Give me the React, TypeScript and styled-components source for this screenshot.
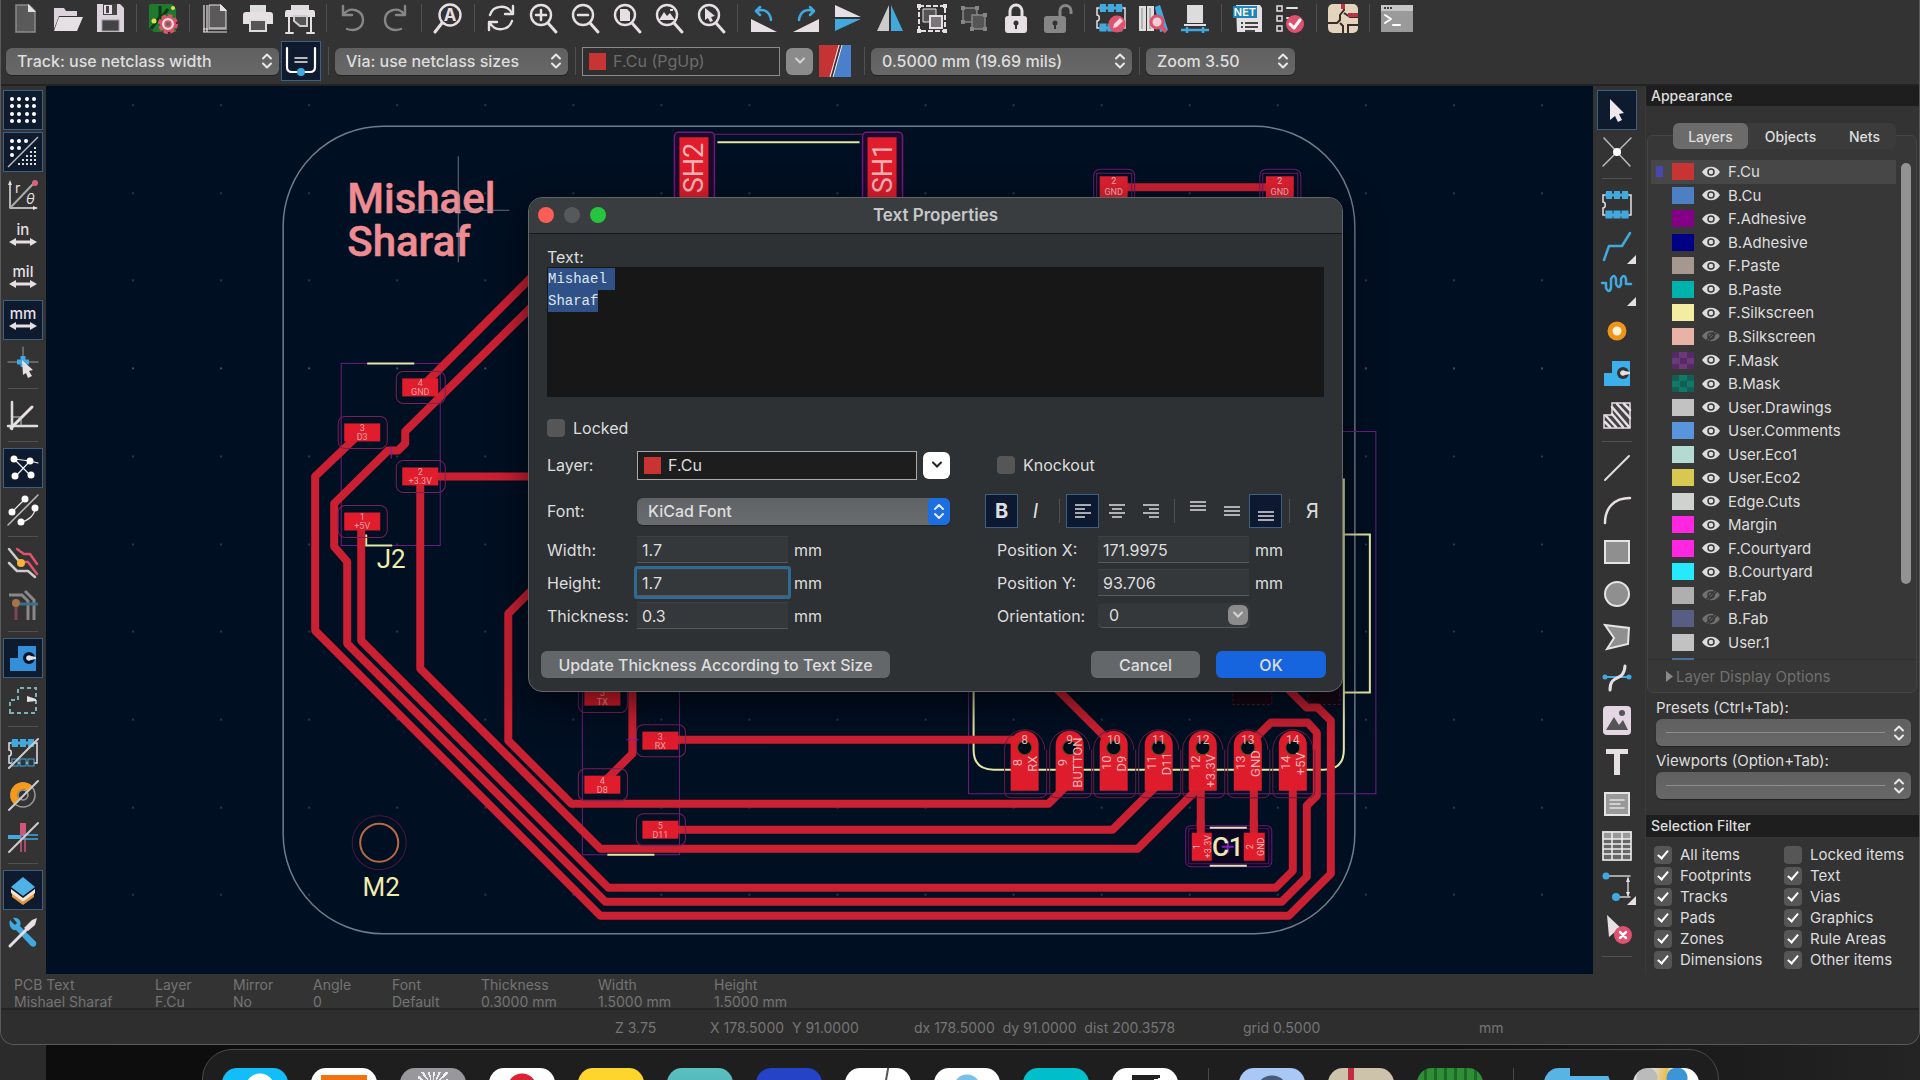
import React, { useEffect, useRef } from "react";
import styled, { createGlobalStyle, css } from "styled-components";

const UI = `Inter, "Liberation Sans", Arial, sans-serif`;
const MONO = `"Liberation Mono", "Courier New", monospace`;
const BOARD = `Roboto, "Liberation Sans", sans-serif`;

const GlobalStyle = createGlobalStyle`
  *, *::before, *::after { box-sizing: border-box; }
  html, body { margin: 0; height: 100%; background: #111; overflow: hidden; }
  button, input, select, textarea { font: inherit; color: inherit; margin: 0; }
  svg { display: block; }
`;

const Desktop = styled.div`
  display: flex;
  flex-direction: column;
  height: 100vh;
  overflow: hidden;
  font-family: ${UI};
  font-size: 16px;
  color: #dedede;
  background: linear-gradient(90deg, #2b2b2b 0 46px, #0d0d0d 46px, #101010 75%, #242424);
`;

const AppWindow = styled.div`
  flex: 1;
  min-height: 0;
  display: flex;
  flex-direction: column;
  background: #333;
  border: 1px solid #5a5a5a;
  border-top: 0;
  border-radius: 0 0 14px 14px;
  overflow: hidden;
`;

/* ---------- icons ---------- */

const W = "#e6dfe4";
const B = "#42a9de";
const R = "#e0506f";
const G = "#868686";
const O = "#f39a1c";

const line = (d: string, c = W, w = 2) => (
  <path d={d} fill="none" stroke={c} strokeWidth={w} strokeLinecap="round" strokeLinejoin="round" />
);
const lens = (inner: React.ReactNode) => (
  <>
    <circle cx="13" cy="12" r="10" fill="none" stroke={W} strokeWidth="2.4" />
    <path d="M20 20L28 29" stroke={W} strokeWidth="3" strokeLinecap="round" />
    <g transform="translate(-4 0)">{inner}</g>
  </>
);
const unit = (t: string) => (
  <>
    <text x="15" y="14" fill={W} fontSize="15" fontWeight="500" textAnchor="middle">{t}</text>
    <path d="M1 21L8 17V19.500H22V17L29 21L22 25V22.500H8V25Z" fill={W} />
  </>
);
const chip = (fillBottom = true) => (
  <>
    <path d="M1 5H29V25H1V18C4 18 4 12 1 12Z" fill="none" stroke={W} strokeWidth="1.500" />
    {[5, 13, 21].map((x) => (
      <g key={x}>
        <rect x={x - 1} y="1" width="6" height="8" fill={B} />
        <rect x={x - 1} y="21" width="6" height="7" fill={fillBottom ? B : "#333"} stroke={B} />
      </g>
    ))}
    <path d="M3 5H27" stroke={B} strokeWidth="3" />
    {fillBottom && <path d="M3 25H27" stroke={B} strokeWidth="3" />}
  </>
);
const zone = (fill: string, bg: string) => (
  <>
    <path d="M2 28V15H10V3H28V28Z" fill={fill} />
    <circle cx="21" cy="15" r="6" fill={bg} />
    <path d="M18 15a3 3 0 0 1 5-2L28 14V16L23 17a3 3 0 0 1-5-2Z" fill={W} />
  </>
);
const corner = <path d="M34 23V32H25Z" fill={W} />;

const ICONS: Record<string, React.ReactNode> = {
  newFile: <><path d="M5 2H18L24 8V29H5Z" fill="#5a5a5a" stroke="#8a8a8a" strokeWidth="1.500" /><path d="M17 1L25 9H17Z" fill={W} /></>,
  open: <><path d="M1 26V5H11L13 8H24V13H6Z" fill="#ddd3da" /><path d="M6 14H30L24 28H1Z" fill={W} /></>,
  save: <><path d="M2 1H25L29 5V29H2Z" fill="#ddd3dd" /><rect x="8" y="1" width="14" height="11" fill="#444" /><rect x="9" y="2" width="8" height="9" fill="#e8e0e6" /><rect x="11" y="3" width="3" height="7" fill="#444" /><rect x="7" y="17" width="17" height="11" fill="#444" stroke="#999" /></>,
  board: <><path d="M1 3Q1 1 3 1H24L28 6V29H6L1 25Z" fill="#1f7a2e" /><path d="M3 26L12 14V3M14 14L20 6" stroke="#0c3b17" strokeWidth="3" fill="none" /><circle cx="6" cy="18" r="2.500" fill="#e2e04a" /><circle cx="25" cy="5" r="2" fill="#e2e04a" /><circle cx="20" cy="21" r="8" fill="none" stroke={R} strokeWidth="4" strokeDasharray="4 2.280" /><circle cx="20" cy="21" r="7" fill="#e7e0da" stroke={R} strokeWidth="2" /><circle cx="20" cy="21" r="3" fill="#6b6b5a" stroke={R} strokeWidth="1.500" /></>,
  pageSettings: <><path d="M8 2H20L25 7V25H8Z" fill="#5a5a5a" stroke={W} strokeWidth="1" /><path d="M19 1L26 8H19Z" fill={W} /><path d="M3 2V29M6 2V29M2 26H26M2 29H26" stroke={W} strokeWidth="1.200" /></>,
  print: <><path d="M7 2H23V9H7Z" fill="#ddd" /><path d="M0 12Q0 9 3 9H27Q30 9 30 12V21H24V16H6V21H0Z" fill={W} /><path d="M7 17H23V28H7Z" fill="#555" stroke="#ddd" strokeWidth="2" /></>,
  plot: <><path d="M6 2H24V8H6Z" fill="#ddd" /><path d="M0 10Q0 7 2 7H28Q30 7 30 10V14H0Z" fill={W} /><path d="M9 13H22V23H15L9 18Z" fill="#555" stroke="#ccc" strokeWidth="2" />{line("M4 14V29M26 14V29M1 30H8M22 30H29")}</>,
  undo: <>{line("M5 3V12H14M6 11C12 3 25 7 25 17C25 25 17 29 9 26", G, 2.400)}</>,
  redo: <>{line("M25 3V12H16M24 11C18 3 5 7 5 17C5 25 13 29 21 26", G, 2.400)}</>,
  find: <><circle cx="17" cy="12" r="10.500" fill="none" stroke={W} strokeWidth="2.400" /><path d="M9 20L2 29" stroke={W} strokeWidth="3" strokeLinecap="round" /><text x="17" y="18" fill={W} fontSize="17" fontWeight="700" textAnchor="middle">A</text></>,
  refresh: <>{line("M27 3V11H19M26 10C21 1 7 2 4 12M3 27V19H11M4 20C9 29 23 28 26 18", W, 2.400)}</>,
  zoomIn: lens(line("M12 12H22M17 7V17", W, 2.500)),
  zoomOut: lens(line("M12 12H22", W, 2.500)),
  zoomPage: lens(<path d="M12 6H19L22 9V18H12Z" fill={W} />),
  zoomObjects: lens(<path d="M9 17L14 9L17 13L20 10L25 17ZM20 6h3v2h-3Z" fill={W} />),
  zoomSelect: lens(<path d="M13 5L23 13L19 14L21 18L18 19L16 15L13 17Z" fill={W} />),
  rotateLeft: <><path d="M2 16V29H28Z" fill={W} />{line("M11 4L7 8L11 12M8 8C15 5 21 9 22 17", B, 2.500)}</>,
  rotateRight: <><path d="M28 16V29H2Z" fill={W} />{line("M19 4L23 8L19 12M22 8C15 5 9 9 8 17", B, 2.500)}</>,
  flipV: <><path d="M2 2L28 14H2Z" fill={W} /><path d="M2 28L28 16H2Z" fill={B} /></>,
  flipH: <><path d="M14 2V28H2Z" fill="#ccc" /><path d="M16 2V28H28Z" fill={B} /></>,
  group: <><path d="M2 3H28V28H2Z" fill="none" stroke={W} strokeWidth="2" strokeDasharray="5 2" /><path d="M6 6H19V19H6Z" fill="#555" stroke={W} /><path d="M13 13H25V25H13Z" fill="#777" stroke={W} strokeWidth="2" /><path d="M0 1H4V5H0ZM26 1H30V5H26ZM0 26H4V30H0ZM26 26H30V30H26Z" fill={W} /></>,
  ungroup: <><path d="M4 5H18V19H4Z" fill="#444" stroke={G} strokeWidth="1.500" /><path d="M13 12H26V26H13Z" fill="#555" stroke={G} strokeWidth="1.500" /><path d="M2 3H6V7H2ZM16 3H20V7H16ZM2 17H6V21H2ZM24 10H28V14H24ZM11 24H15V28H11ZM24 24H28V28H24Z" fill={G} /></>,
  lock: <><path d="M9 14V8a6 6 0 0 1 12 0V14" fill="none" stroke={W} strokeWidth="3" /><rect x="4" y="13" width="22" height="17" rx="3" fill={W} /><circle cx="15" cy="20" r="2.500" fill="#333" /><path d="M14 20H16V26H14Z" fill="#333" /></>,
  unlock: <><path d="M17 14V8a5 5 0 0 1 11 0V11" fill="none" stroke={G} strokeWidth="3" /><rect x="1" y="13" width="22" height="17" rx="3" fill={G} /><circle cx="12" cy="20" r="2.500" fill="#333" /><path d="M11 20H13V26H11Z" fill="#333" /></>,
  fpEditor: <>{chip()}<circle cx="21" cy="21" r="8.500" fill={R} /><path d="M17 25L18 21L24 15L27 18L21 24Z" fill="#f6d8de" /></>,
  library: <><path d="M1 3H8V28H1ZM9 3H16V28H9Z" fill="#ddd" /><path d="M4 5V26M12 5V26" stroke="#888" /><path d="M17 4L22 2L30 27L22 29Z" fill={B} /><circle cx="19" cy="19" r="6" fill="#ecd0d6" stroke={R} strokeWidth="3" /><path d="M23 23L28 29" stroke={R} strokeWidth="4" /></>,
  update: <><path d="M7 2H23V20H7Z" fill="#dcdcdc" /><path d="M4 22H26" stroke={W} strokeWidth="2" /><path d="M1 27H29M7 24V30M23 24V30" stroke={B} strokeWidth="2.500" /></>,
  net: <><path d="M3 2H27L29 5V29H4Z" fill={W} /><rect x="0" y="3" width="24" height="12" fill="#1f86b8" /><text x="12" y="13" fill="#fff" fontSize="11" fontWeight="600" textAnchor="middle">NET</text><path d="M12 20H25M12 24H25M8 20H10M8 24H10M12 28H22" stroke="#444" strokeWidth="2" /></>,
  drc: <><path d="M2 3H7V8H2ZM2 13H7V18H2ZM2 23H7V28H2Z" fill="none" stroke={W} strokeWidth="1.500" />{line("M12 5H22M12 15H16")}<circle cx="20" cy="21" r="9" fill={R} />{line("M15 21L19 25L25 17", "#fff", 3)}</>,
  copper: <><rect x="0" y="1" width="30" height="29" rx="5" fill="#e3d5bd" /><path d="M16 1V7L12 12V17L9 20H0M15 30V23L12 20M16 10L22 14H30M20 30V22H30" fill="none" stroke="#3a2b28" strokeWidth="2" /><path d="M20 12H30M15 1V6" stroke="#b8324a" strokeWidth="4" /></>,
  terminal: <><rect x="0" y="2" width="32" height="27" fill="#9a9a9a" /><rect x="0" y="2" width="32" height="6" fill="#c6c6c6" /><path d="M3 5H11" stroke="#444" strokeWidth="2" strokeDasharray="2 1" />{line("M4 12L10 16L4 20M12 22H19", "#fff")}</>,

  dots: <>{[4, 11, 19, 26].map((y) => [4, 11, 19, 26].map((x) => <circle key={`${x}-${y}`} cx={x} cy={y} r="2" fill="#fff" />))}</>,
  dotsSplit: <>{[[4, 4], [11, 4], [18, 4], [4, 11], [11, 11], [4, 18]].map(([x, y]) => <circle key={`${x}-${y}`} cx={x} cy={y} r="2" fill="#fff" />)}<path d="M0 30L30 0" stroke="#bbb" strokeWidth="1.500" />{[10, 14, 18, 22, 26].map((y) => [10, 14, 18, 22, 26].filter((x) => x + y > 34).map((x) => <rect key={`${x}-${y}`} x={x} y={y} width="2" height="2" fill="#ddd" />))}</>,
  polar: <>{line("M2 29V4M2 29H28", W, 1.500)}<path d="M0 6L2 1L4 6ZM25 27L30 29L25 31Z" fill={W} />{line("M3 28L26 4", "#aaa")}<circle cx="27" cy="4" r="3" fill="#d9657b" /><text x="7" y="14" fill={W} fontSize="14">r</text><text x="18" y="25" fill={W} fontSize="14" fontStyle="italic">θ</text></>,
  inch: unit("in"),
  mil: unit("mil"),
  mm: unit("mm"),
  crosshair: <>{line("M0 15H30M15 0V16", "#999", 1)}<path d="M9 15H21M15 9V20" stroke={B} strokeWidth="5" /><path d="M14 13L25 23L21 24L24 29L20 31L18 26L15 28Z" fill={W} /></>,
  angle: <>{line("M4 2V29M0 26H29", "#ddd", 2.500)}{line("M3 28L24 7", W, 3)}<path d="M5 17H13V26" fill="none" stroke="#ccc" /></>,
  ratsnest: <>{line("M6 6L22 22M22 8L7 24M6 6L22 8L30 10", "#eee", 1.200)}{[[6, 6], [22, 8], [7, 23], [23, 22]].map(([x, y]) => <circle key={x + y * 40} cx={x} cy={y} r="3.500" fill="#fff" />)}</>,
  curvedNest: <>{line("M0 30L30 0", "#bbb", 1.500)}{line("M4 17L17 4M27 13C27 20 20 26 13 27", "#eee", 1.200)}{[[4, 17], [17, 4], [27, 13], [13, 27]].map(([x, y]) => <circle key={x + y * 40} cx={x} cy={y} r="3.500" fill="#fff" />)}</>,
  inactive: <>{line("M1 1L10 12L14 15M1 15L9 23H20L27 29", "#ccc", 2.500)}{line("M9 1L16 6H22L29 16M16 14H20L29 26", R, 2.500)}<circle cx="13" cy="15" r="4" fill="#f7b335" /></>,
  netColor: <><path d="M1 5H14L20 11V30M17 1L26 10V30" fill="none" stroke="#888" strokeWidth="3" /><path d="M12 14H30" stroke="#3c6f8c" strokeWidth="3" /><path d="M8 14V30" stroke="#804558" strokeWidth="3" /><circle cx="8" cy="13" r="4" fill="#a2764a" /></>,
  zoneFill: zone("#3390d8", "#00132a"),
  zoneOutline: <><path d="M2 28V15H10V3H28V28Z" fill="none" stroke="#7fb0b8" strokeWidth="2" strokeDasharray="4 3" /><path d="M19 11L28 14V16L19 17Z" fill={W} /></>,
  chipOff: <>{chip(false)}{line("M1 30L30 1", "#ccc")}</>,
  viaOff: <><circle cx="15" cy="15" r="12" fill="none" stroke="#999" strokeWidth="1.500" /><circle cx="15" cy="15" r="5" fill="none" stroke="#999" strokeWidth="1.500" /><path d="M6 24A12 12 0 0 1 24 6L19 11A5 5 0 0 0 11 19Z" fill={O} />{line("M1 30L30 1", "#ccc")}</>,
  trackOff: <><path d="M15 1V14" stroke="#d0557a" strokeWidth="6" /><path d="M13 14V30M17 14V30" stroke="#d0557a" strokeWidth="1.500" /><path d="M0 15H13" stroke={B} strokeWidth="4" /><path d="M15 13H30M15 17H30" stroke={B} strokeWidth="1.500" />{line("M1 30L30 1", "#ccc")}</>,
  layers: <><path d="M4 18L15 27L26 18V22L15 30L4 22Z" fill="#e2953f" /><path d="M3 14L15 23L27 14V18L15 27L3 18Z" fill="#f3e5d0" /><path d="M15 2L27 12L15 21L3 12Z" fill="#4fb2e6" /></>,
  tools: <><path d="M2 3L7 8L9 6L5 1C11 0 14 5 12 9L28 25C29 29 26 31 23 29L8 13C4 14 0 9 2 3Z" fill={B} />{line("M2 29L18 13", W, 3)}<path d="M16 11L24 3L29 1L27 8L20 14Z" fill={W} /></>,

  select: <path d="M8 4L22 18L17 19L20 25L16 27L13 21L8 25Z" fill="#efe8ee" />,
  highlight: <>{line("M2 1L28 29M29 1L1 29", "#bbb", 1.500)}<circle cx="15" cy="15" r="4" fill="#fff" /></>,
  footprint: chip(),
  route: <>{line("M2 28L7 14H20L28 1", B, 2.500)}{corner}</>,
  tune: <>{line("M0 9H4V14Q7 20 9 14V5Q12-1 14 5V10Q17 16 19 10V5Q22-1 24 5V10H29", B, 2.500)}{corner}</>,
  via: <><circle cx="15" cy="15" r="7" fill="#fff2d8" stroke="#ee9418" strokeWidth="5" /></>,
  addZone: zone("#3bb0ea", "#333"),
  ruleArea: <><path d="M2 28V15H10V3H28V28Z" fill="#444" stroke={W} strokeWidth="1.500" />{line("M10 7L27 27M15 4L28 18M22 4L28 10M10 14L21 27M4 16L14 27M3 22L8 27", W, 2.500)}</>,
  drawLine: line("M3 27L27 3"),
  arc: line("M3 28C3 13 12 3 28 3", W, 2.500),
  rect: <rect x="3" y="4" width="24" height="22" fill="#8f8f8f" stroke="#e4e4e4" strokeWidth="2" />,
  circle: <circle cx="15" cy="15" r="12" fill="#8f8f8f" stroke="#e4e4e4" strokeWidth="2" />,
  polygon: <path d="M3 4L27 7L26 23L5 28L12 17Z" fill="#8f8f8f" stroke="#e4e4e4" strokeWidth="2" />,
  bezier: <>{line("M3 14H27", B, 2)}<circle cx="3" cy="14" r="2.500" fill={B} /><circle cx="27" cy="14" r="2.500" fill={B} />{line("M8 27C8 10 22 20 23 3", W, 3)}</>,
  image: <><rect x="1" y="1" width="28" height="29" rx="4" fill="#e4d7e3" /><path d="M4 25L12 12L17 20L21 15L26 25Z" fill="#555" /><circle cx="20" cy="8" r="3" fill="#555" /></>,
  text: <path d="M4 2H26V7H18V28H12V7H4Z" fill={W} />,
  textBox: <><rect x="3" y="4" width="24" height="22" fill="#999" stroke="#e4e4e4" strokeWidth="2" />{line("M8 11H22M8 15H18M8 19H22", W, 1.500)}</>,
  table: <><rect x="0" y="0" width="30" height="30" fill="#666" /><rect x="0" y="0" width="30" height="8" fill="#999" /><path d="M1 1H29V29H1ZM1 8H29M1 13H29M1 18H29M1 23H29M10 1V29M20 1V29" fill="none" stroke="#eee" strokeWidth="1.500" /></>,
  dimension: <>{line("M4 3H28M15 24H28M26 5V22", "#ccc", 1.500)}<circle cx="4" cy="3" r="3.500" fill={B} /><circle cx="14" cy="24" r="4" fill={B} /><path d="M24 9L26 4L28 9ZM24 19L26 24L28 19Z" fill={W} />{corner}</>,
  remove: <><path d="M5 0L22 16L13 17L7 22Z" fill={W} /><circle cx="21" cy="20" r="9" fill={R} />{line("M18 17L24 23M24 17L18 23", "#fff", 2.500)}</>,
  autoWidth: <>{line("M1 2V21Q1 26 6 26H24Q29 26 29 21V2", "#fff", 2.200)}{line("M9 12H21M9 16H21", "#eee", 1.500)}<circle cx="15" cy="26" r="4" fill={B} /></>,
};

const Icon = ({ name }: { name: string }) => (
  <svg width="30" height="30" viewBox="0 0 30 30" overflow="visible" aria-hidden="true" fontFamily={UI}>
    {ICONS[name]}
  </svg>
);

/* ---------- toolbars ---------- */

const ToolButton = styled.button<{ $on?: boolean; $w?: number }>`
  flex: none;
  width: ${(p) => p.$w ?? 40}px;
  height: 40px;
  padding: 0;
  display: grid;
  place-items: center;
  border: 1px solid ${(p) => (p.$on ? "#3f5f80" : "transparent")};
  background: ${(p) => (p.$on ? "#0e1a2e" : "transparent")};
`;

const Toolbar = styled.div`
  flex: none;
  height: 35px;
  padding: 0 5px;
  display: flex;
  align-items: center;
  gap: 2px;
`;

const OptionsBar = styled.div`
  flex: none;
  height: 51px;
  padding: 3px 5px 0;
  display: flex;
  align-items: center;
  border-bottom: 2px solid #232323;
`;

const VRule = styled.span<{ $w?: number; $h?: number }>`
  flex: none;
  width: ${(p) => p.$w ?? 9}px;
  height: ${(p) => p.$h ?? 28}px;
  background: linear-gradient(#505050, #505050) center / 1px 100% no-repeat;
`;

const HRule = styled.span`
  flex: none;
  width: 30px;
  height: 9px;
  background: linear-gradient(#505050, #505050) center / 100% 1px no-repeat;
`;

const SideBar = styled.div<{ $w: number; $pr: number }>`
  flex: none;
  width: ${(p) => p.$w}px;
  padding: 4px ${(p) => p.$pr}px 0 1px;
  display: flex;
  flex-direction: column;
  align-items: center;
  gap: 2px;
`;

const SelectShell = styled.div<{ $w?: number }>`
  flex: none;
  width: ${(p) => (p.$w ? `${p.$w}px` : "100%")};
  height: 27px;
  display: grid;
  align-items: center;
  border-radius: 6px;
  background: linear-gradient(#606060, #686868);
  box-shadow: 0 1px 1px #222;
  overflow: hidden;
  > * { grid-area: 1 / 1; }
  > svg { justify-self: end; margin-right: 6px; pointer-events: none; }
`;

const SelectBox = styled.select`
  width: 100%;
  height: 100%;
  padding: 0 24px 0 11px;
  border: 0;
  background: transparent;
  appearance: none;
  outline: none;
  font-weight: 500;
`;

const UpDown = ({ box }: { box?: boolean }) => (
  <svg width={box ? 22 : 12} height={box ? 27 : 18} viewBox={box ? "-5 -4.500 22 27" : "0 0 12 18"} aria-hidden="true">
    {box && <rect x="-5" y="-5" width="22" height="28" rx="5" fill="#1c6fe0" />}
    <path d="M2 6.500L6 2.500L10 6.500M2 11.500L6 15.500L10 11.500" fill="none" stroke="#e8e8e8" strokeWidth="2" strokeLinecap="round" strokeLinejoin="round" />
  </svg>
);

const Chooser = ({ label, value, w }: { label: string; value: string; w?: number }) => (
  <SelectShell $w={w}>
    <SelectBox aria-label={label} defaultValue={value}>
      <option>{value}</option>
    </SelectBox>
    <UpDown />
  </SelectShell>
);

const LayerField = styled.div<{ $w: number; $dim?: boolean }>`
  flex: none;
  width: ${(p) => p.$w}px;
  height: 29px;
  padding-left: 6px;
  display: flex;
  align-items: center;
  gap: 7px;
  border: 1px solid ${(p) => (p.$dim ? "#8a8a8a" : "#a9a9a9")};
  background: ${(p) => (p.$dim ? "#2f2f2f" : "#1d1d1d")};
  color: ${(p) => (p.$dim ? "#6c6c6c" : "#dedede")};
`;

const Swatch = styled.span<{ $c: string; $w: number; $h: number }>`
  flex: none;
  width: ${(p) => p.$w}px;
  height: ${(p) => p.$h}px;
  background: ${(p) => p.$c};
`;

const DropButton = styled.button<{ $light?: boolean; $s?: number }>`
  flex: none;
  width: ${(p) => p.$s ?? 27}px;
  height: ${(p) => p.$s ?? 27}px;
  margin-left: 6px;
  padding: 0;
  display: grid;
  place-items: center;
  border: 0;
  border-radius: 6px;
  background: ${(p) => (p.$light ? "#fff" : "#8b8b8b")};
  color: ${(p) => (p.$light ? "#222" : "#d4d4d4")};
`;

const Chevron = () => (
  <svg width="12" height="8" viewBox="0 0 12 8" aria-hidden="true">
    <path d="M2 1.500L6 5.500L10 1.500" fill="none" stroke="currentColor" strokeWidth="2" strokeLinecap="round" />
  </svg>
);

const TOP: string[] = [
  "newFile", "open", "save", "|", "board", "|", "pageSettings", "print", "plot", "|", "undo", "redo", "|", "find", "|",
  "refresh", "zoomIn", "zoomOut", "zoomPage", "zoomObjects", "zoomSelect", "|", "rotateLeft", "rotateRight", "flipV",
  "flipH", "group", "ungroup", "lock", "unlock", "|", "fpEditor", "library", "update", "|", "net", "drc", "|", "copper",
  "|", "terminal",
];
const LEFT: string[] = [
  "dots", "dotsSplit", "polar", "inch", "mil", "mm", "crosshair", "|", "angle", "|", "ratsnest", "curvedNest", "|",
  "inactive", "netColor", "|", "zoneFill", "zoneOutline", "|", "chipOff", "viaOff", "trackOff", "|", "layers", "tools",
];
const RIGHT: string[] = [
  "select", "highlight", "|", "footprint", "route", "tune", "via", "addZone", "ruleArea", "|", "drawLine", "arc", "rect",
  "circle", "polygon", "bezier", "image", "text", "textBox", "table", "dimension", "remove", "|",
];
const ACTIVE = new Set(["dots", "dotsSplit", "mm", "ratsnest", "zoneFill", "layers", "select"]);

const ToolList = ({ items, vertical }: { items: string[]; vertical?: boolean }) => (
  <>
    {items.map((name, i) =>
      name === "|" ? (
        vertical ? <HRule key={i} /> : <VRule key={i} />
      ) : (
        <ToolButton key={i} type="button" aria-label={name} $on={ACTIVE.has(name)}>
          <Icon name={name} />
        </ToolButton>
      )
    )}
  </>
);

/* ---------- board canvas ---------- */

const Main = styled.div`
  flex: 1;
  min-height: 0;
  display: flex;
`;

const Canvas = styled.div`
  flex: 1;
  min-width: 0;
  background: #000f22;
  > svg { width: 100%; height: 100%; }
`;

const TRACKS = [
  "M424 384L560 248",
  "M540 298L405 431V443L398 450H388L334 503V546L347 561V643L605 901H1281L1306 876V805L1316 795V732L1307 722H1270L1254 738",
  "M361 432L315 476V630L600 915H1288L1330 873V720L1317 707H1306L1286 687",
  "M361 521V640L608 887H1275L1292 870V780",
  "M420 476H540",
  "M420 476V668L600 848H1137L1196 789",
  "M540 581L508 613V740L571 803H1048L1066 785",
  "M632 680V753L602 783",
  "M660 739H1024",
  "M660 829H1112L1154 787",
  "M1050 682L1106 738",
  "M1113 187H1279",
  "M1200 780V840",
  "M1253 780V840",
];

const Pad = ({ x, y, n, net, h = 18 }: { x: number; y: number; n: string; net: string; h?: number }) => (
  <g>
    <rect x={x - 24} y={y - 16} width="49" height="32" rx="7" fill="none" stroke="#7a1f58" />
    <rect x={x - 18} y={y - h / 2} width="36" height={h} fill="#e01c2d" />
    <g fill="#f3a0a0" fontSize="9" textAnchor="middle">
      <text x={x} y={y - 1}>{n}</text>
      <text x={x} y={y + 8}>{net}</text>
    </g>
  </g>
);

const HEADER_PINS: [string, string][] = [
  ["8", "RX"], ["9", "BUTTON"], ["10", "D9"], ["11", "D11"], ["12", "+3.3V"], ["13", "GND"], ["14", "+5V"],
];

const Board = () => (
  <svg viewBox="46 85 1546 889" preserveAspectRatio="xMidYMid slice" fontFamily={BOARD} role="img" aria-label="Board layout">
    {Array.from({ length: 10 }, (_, r) =>
      Array.from({ length: 17 }, (_, c) => (
        <rect key={`${r}-${c}`} x={132 + c * 88} y={Math.round(104 + r * 87.7)} width="2" height="2" fill={r === 3 ? "#3f5163" : "#26384a"} />
      ))
    )}
    <rect x="283" y="126" width="1071" height="807" rx="100" fill="none" stroke="#6f7c8c" strokeWidth="1.500" />
    <g fill="none" stroke="#6c1f80">
      <rect x="341" y="363" width="99" height="182" />
      <path d="M582 680V854H679V680M675 134H902M968 680V793H1375V431H1340" />
    </g>
    <g fill="none" stroke="#e6e6a4" strokeWidth="2">
      <path d="M717 142H859M367 363H414M366 534V545H392M607 854H654" />
      <path d="M973 680V749Q973 769 993 769H1323Q1343 769 1343 749V478M1343 534H1369V692H1343" />
    </g>
    <g fill="#150714" stroke="#5a1626" strokeDasharray="3 2">
      <rect x="1232" y="680" width="39" height="24" />
      <rect x="1307" y="680" width="32" height="24" />
    </g>
    {[694, 882].map((x, i) => (
      <g key={x}>
        <rect x={x - 20} y="132" width="40" height="90" rx="4" fill="#1c0a2e" stroke="#6d1a78" strokeWidth="1.500" />
        <rect x={x - 15} y="137" width="29" height="80" fill="#e01c2d" />
        <text transform={`translate(${x + 9} 193) rotate(-90)`} fill="#f5b5b5" fontSize="27">{i ? "SH1" : "SH2"}</text>
      </g>
    ))}
    <g fill="none" stroke="#cb2032" strokeWidth="8" strokeLinecap="round" strokeLinejoin="round">
      {TRACKS.map((d) => <path key={d} d={d} />)}
    </g>
    {[1113, 1279].map((x) => (
      <g key={x}>
        <path d={`M${x - 20} 210V176Q${x - 20} 169 ${x - 13} 169H${x + 14}Q${x + 21} 169 ${x + 21} 176V210M${x - 17} 210V173H${x + 18}V210`} fill="none" stroke="#6d1a68" />
        <rect x={x - 14} y="176" width="28" height="36" fill="#dc2030" />
        <g fill="#f3b0b0" fontSize="9" textAnchor="middle">
          <text x={x} y="184">2</text>
          <text x={x} y="195">GND</text>
        </g>
      </g>
    ))}
    <Pad x={420} y={387} n="4" net="GND" />
    <Pad x={362} y={432} n="3" net="D3" />
    <Pad x={420} y={476} n="2" net="+3.3V" />
    <Pad x={362} y={521} n="1" net="+5V" />
    <Pad x={602} y={696} n="5" net="TX" />
    <Pad x={660} y={740} n="3" net="RX" />
    <Pad x={602} y={784} n="4" net="D8" />
    <Pad x={660} y={829} n="5" net="D11" />
    {HEADER_PINS.map(([n, net], i) => {
      const x = 1024 + Math.round(i * 44.6);
      return (
        <g key={n} fill="#f6b3b3">
          <path d={`M${x - 20} 790V749A20 20 0 0 1 ${x + 20} 749M${x - 20} 749V790Q${x - 20} 797 ${x - 13} 797H${x + 15}Q${x + 22} 797 ${x + 22} 790V749`} fill="none" stroke="#6a1b40" />
          <path d={`M${x - 14} 790V744A14 14 0 0 1 ${x + 14} 744V790Z`} fill="#df1c2c" />
          <circle cx={x} cy="747" r="7" fill="#020d1c" stroke="#5f4a1c" />
          <text x={x} y="743" fontSize="12" textAnchor="middle">{n}</text>
          <text transform={`translate(${x - 3} 762) rotate(-90)`} fontSize="13" textAnchor="middle">{n}</text>
          <text transform={`translate(${x + 12} ${net.length > 3 ? 787 : 763}) rotate(-90)`} fontSize="13" textAnchor={net.length > 3 ? "start" : "middle"}>{net}</text>
        </g>
      );
    })}
    <rect x="1185" y="825" width="86" height="41" rx="5" fill="#0b0620" stroke="#6d1a78" />
    <rect x="1188" y="828" width="80" height="35" fill="none" stroke="#4d1660" />
    <path d="M1200 820V840M1253 820V840" stroke="#cb2032" strokeWidth="8" />
    <path d="M1191 832H1211V860H1191ZM1243 832H1264V860H1243Z" fill="#e01c2d" />
    <path d="M1209 827H1246M1209 865H1246" stroke="#e6e0c0" strokeWidth="2" />
    <g fill="#f6b3b3" fontSize="9" textAnchor="middle">
      <text transform="translate(1199 846) rotate(-90)">1</text>
      <text transform="translate(1210 846) rotate(-90)">+3.3V</text>
      <text transform="translate(1252 846) rotate(-90)">2</text>
      <text transform="translate(1263 846) rotate(-90)">GND</text>
    </g>
    <path d="M1221 846H1233M1227 840V852" stroke="#7a22b8" strokeWidth="2" />
    <g fill="#efedab" fontSize="26" textAnchor="middle">
      <text x="1227" y="855" fill="#ece5b4" fontWeight="500">C1</text>
      <text x="391" y="567">J2</text>
      <text x="381" y="895">M2</text>
    </g>
    <circle cx="379" cy="842" r="27" fill="none" stroke="#4a1642" />
    <circle cx="379" cy="842" r="19" fill="none" stroke="#b56a45" strokeWidth="2" />
    <path d="M626 739H638M391 446V458" stroke="#7a22a8" />
    <g fill="#ee8c92" stroke="#ee8c92" strokeWidth="0.500" strokeLinejoin="round" fontSize="42" fontWeight="500">
      <text x="347" y="213">Mishael</text>
      <text x="347" y="256">Sharaf</text>
    </g>
    <path d="M458 156V262M409 210H509" stroke="#8d98a6" opacity="0.700" />
  </svg>
);

/* ---------- appearance panel ---------- */

const Panel = styled.aside`
  flex: none;
  width: 274px;
  display: flex;
  flex-direction: column;
  border-left: 1px solid #3a3a3a;
  font-size: 15px;
`;

const PanelHeader = styled.h2<{ $h: number }>`
  flex: none;
  height: ${(p) => p.$h}px;
  margin: 0;
  padding-left: 5px;
  font-size: 14px;
  font-weight: 500;
  line-height: ${(p) => p.$h}px;
  background: #1e1e1e;
`;

const FilterHeader = styled(PanelHeader)`
  margin-top: 12px;
`;

const Notebook = styled.div`
  margin: 29px 2px 4px 1px;
  border: 1px solid #454545;
  border-radius: 6px;
  background: #373737;
`;

const Tabs = styled.div`
  width: 223px;
  margin: -13px 0 11px 25px;
  display: grid;
  grid-template-columns: 75px 1fr 63px;
  border-radius: 6px;
  background: #3b3b3b;
`;

const Tab = styled.button<{ $on?: boolean }>`
  height: 26px;
  padding: 0;
  border: 0;
  border-radius: 6px;
  font-size: 14px;
  font-weight: 500;
  background: ${(p) => (p.$on ? "#6b6b6b" : "transparent")};
`;

const LayerArea = styled.div`
  height: 500px;
  display: flex;
  padding-left: 3px;
  border-bottom: 1px solid #303030;
`;

const LayerList = styled.div`
  flex: 1;
  height: 494px;
  display: flex;
  flex-direction: column;
`;

const LayerRow = styled.div<{ $on?: boolean }>`
  flex: 1;
  min-height: 0;
  display: grid;
  grid-template-columns: 8px 22px 18px 1fr;
  column-gap: 8px;
  padding-left: 5px;
  align-items: center;
  background: ${(p) => (p.$on ? "#474747" : "transparent")};
`;

const NextSwatch = styled.span`
  flex: none;
  width: 22px;
  height: 2px;
  margin: 4px 0 -6px 21px;
  background: #4d6f9c;
`;

const ScrollTrack = styled.div`
  flex: none;
  width: 20px;
  padding: 3px 5px 0;
`;

const ScrollThumb = styled.div`
  height: 421px;
  border-radius: 5px;
  background: #929292;
`;

const EyeButton = styled.button`
  padding: 0;
  border: 0;
  background: transparent;
`;

const Eye = ({ off }: { off?: boolean }) => (
  <svg width="18" height="12" viewBox="0 0 18 12" aria-hidden="true">
    <path d="M0 6C4-1 14-1 18 6C14 13 4 13 0 6Z" fill={off ? "#707070" : "#dcdcdc"} />
    <circle cx="9" cy="6" r="3" fill={off ? "#707070" : "#dcdcdc"} stroke="#3a3a3a" strokeWidth="1.500" />
    {off && <path d="M3 12L14 0M6 12L17 0" stroke="#373737" strokeWidth="1.500" />}
  </svg>
);

const checks = (a: string, b: string) => `conic-gradient(${a} 25%, ${b} 0 50%, ${a} 0 75%, ${b} 0) 0 0 / 15px 12px`;

const LAYERS: [string, string, boolean?][] = [
  ["F.Cu", "#c83434"], ["B.Cu", "#4d7fc4"], ["F.Adhesive", "#840084"], ["B.Adhesive", "#000084"],
  ["F.Paste", "#a59890"], ["B.Paste", "#00b2ac"], ["F.Silkscreen", "#f2eda1"], ["B.Silkscreen", "#e8b2a7", true],
  ["F.Mask", checks("#6c3a78", "#552a66")], ["B.Mask", checks("#0f7a66", "#145e56")], ["User.Drawings", "#c2c2c2"],
  ["User.Comments", "#5994dc"], ["User.Eco1", "#b4dbd2"], ["User.Eco2", "#d8c852"], ["Edge.Cuts", "#d0d2cd"],
  ["Margin", "#ff26e2"], ["F.Courtyard", "#ff26e2"], ["B.Courtyard", "#26e9ff"], ["F.Fab", "#afafaf", true],
  ["B.Fab", "#585d84", true], ["User.1", "#c2c2c2"],
];

const Disclosure = styled.button`
  display: flex;
  align-items: center;
  gap: 3px;
  height: 32px;
  padding: 0 0 0 18px;
  border: 0;
  background: transparent;
  color: #707070;
`;

const PresetGroup = styled.div`
  padding: 0 8px 0 10px;
  display: flex;
  flex-direction: column;
`;

const PresetLabel = styled.label`
  height: 22px;
  line-height: 22px;
`;

const PresetShell = styled(SelectShell)`
  margin-bottom: 4px;
  > i { height: 1px; margin: 0 26px 0 10px; background: #8e8e8e; }
`;

const FilterGrid = styled.div`
  padding: 7px 0 0 8px;
  display: grid;
  grid-template-columns: 130px 1fr;
  grid-auto-rows: 21px;
  align-items: center;
`;

const CheckLabel = styled.label`
  display: flex;
  align-items: center;
  gap: 8px;
  white-space: nowrap;
`;

const Check = styled.input`
  flex: none;
  width: 18px;
  height: 18px;
  appearance: none;
  display: grid;
  place-items: center;
  border-radius: 4px;
  background: #565656;
  &:checked::after {
    content: "";
    width: 6px;
    height: 11px;
    margin-bottom: 3px;
    border: solid #fff;
    border-width: 0 2px 2px 0;
    transform: rotate(40deg);
  }
`;

const FILTERS: [string, boolean][] = [
  ["All items", true], ["Locked items", false], ["Footprints", true], ["Text", true], ["Tracks", true], ["Vias", true],
  ["Pads", true], ["Graphics", true], ["Zones", true], ["Rule Areas", true], ["Dimensions", true], ["Other items", true],
];

const Preset = ({ id, label }: { id: string; label: string }) => (
  <>
    <PresetLabel htmlFor={id}>{label}</PresetLabel>
    <PresetShell>
      <SelectBox id={id} />
      <i />
      <UpDown />
    </PresetShell>
  </>
);

const Appearance = () => (
  <Panel>
    <PanelHeader $h={20}>Appearance</PanelHeader>
    <Notebook>
      <Tabs role="tablist">
        <Tab role="tab" $on>Layers</Tab>
        <Tab role="tab">Objects</Tab>
        <Tab role="tab">Nets</Tab>
      </Tabs>
      <LayerArea>
        <LayerList>
          {LAYERS.map(([name, color, off], i) => (
            <LayerRow key={name} $on={i === 0}>
              <Swatch $c={i === 0 ? "#4747b4" : "transparent"} $w={7} $h={11} />
              <Swatch $c={color} $w={22} $h={17} />
              <EyeButton type="button" aria-label={`Toggle ${name}`}><Eye off={off} /></EyeButton>
              <span>{name}</span>
            </LayerRow>
          ))}
          <NextSwatch />
        </LayerList>
        <ScrollTrack><ScrollThumb /></ScrollTrack>
      </LayerArea>
      <Disclosure type="button">
        <svg width="7" height="11" viewBox="0 0 7 11" aria-hidden="true"><path d="M0 0L7 5.500L0 11Z" fill="#8a8a8a" /></svg>
        Layer Display Options
      </Disclosure>
    </Notebook>
    <PresetGroup>
      <Preset id="presets" label="Presets (Ctrl+Tab):" />
      <Preset id="viewports" label="Viewports (Option+Tab):" />
    </PresetGroup>
    <FilterHeader $h={22}>Selection Filter</FilterHeader>
    <FilterGrid>
      {FILTERS.map(([name, on]) => (
        <CheckLabel key={name}>
          <Check type="checkbox" defaultChecked={on} />
          {name}
        </CheckLabel>
      ))}
    </FilterGrid>
  </Panel>
);

/* ---------- status ---------- */

const MessagePanel = styled.dl`
  flex: none;
  height: 36px;
  margin: 0;
  padding: 2px 13px 0;
  display: grid;
  grid-template-columns: 141px 78px 80px 79px 89px 117px 116px 1fr;
  border-bottom: 2px solid #242424;
  font-size: 14px;
  line-height: 17px;
  color: #737373;
  dd { margin: 0; }
`;

const StatusBar = styled.footer`
  flex: none;
  height: 34px;
  padding-left: 614px;
  display: grid;
  grid-template-columns: 95px 204px 329px 236px 1fr;
  align-items: center;
  font-size: 14px;
  color: #757575;
  white-space: pre;
  background: #2e2e2e;
`;

const MESSAGES = [
  ["PCB Text", "Mishael Sharaf"], ["Layer", "F.Cu"], ["Mirror", "No"], ["Angle", "0"], ["Font", "Default"],
  ["Thickness", "0.3000 mm"], ["Width", "1.5000 mm"], ["Height", "1.5000 mm"],
];

/* ---------- dock ---------- */

const DockStrip = styled.div`
  flex: none;
  height: 35px;
  padding-top: 4px;
  display: flex;
  justify-content: center;
`;

const DockTray = styled.nav`
  height: 104px;
  padding: 18px 19px;
  display: flex;
  gap: 23px;
  border: 1px solid #4a4a4a;
  border-radius: 30px;
  background: #1e1e1e;
`;

const DockItem = styled.button<{ $bg: string }>`
  width: 66px;
  height: 66px;
  padding: 0;
  border: 0;
  border-radius: 15px;
  background: ${(p) => p.$bg};
`;

const DockRule = styled.span`
  width: 1px;
  margin: 0 7px;
  background: #484848;
`;

const DOCK: [string, string][] = [
  ["Finder", "radial-gradient(circle at 38px 20px, #fff 0 14px, transparent 15px), #12bdf8"],
  ["Editor", "linear-gradient(#f2700f, #f2700f) 10px 7px / 46px 60px no-repeat, #fff"],
  ["Settings", "repeating-conic-gradient(from 0deg at 50% 50%, #eee 0 8deg, transparent 8deg 20deg) 18px 4px / 30px 30px no-repeat, #98989c"],
  ["Recorder", "radial-gradient(circle at 33px 20px, #d92332 0 14px, transparent 15px), #fff"],
  ["Notes", "#fdd52d"],
  ["Mail", "linear-gradient(#5cc0bf, #3ba7ad)"],
  ["Design", "#2443c6"],
  ["Browser", "linear-gradient(100deg, transparent 41px, #555 42px 43px, transparent 44px), #fff"],
  ["Messages", "radial-gradient(circle at 33px 20px, #7cc0ea 0 13px, transparent 14px), #fff"],
  ["Canva", "#00bfcb"],
  ["Slides", "linear-gradient(165deg, #222 0 10px, transparent 0) 20px 7px / 28px 12px no-repeat, #fff"],
  ["|", ""],
  ["Preview", "radial-gradient(circle at 33px 24px, #4a5a78 0 16px, transparent 17px), #a9c8f6"],
  ["KiCad", "linear-gradient(90deg, #cdc3aa 0 20px, #c22c42 20px 26px, #cdc3aa 26px)"],
  ["Board", "repeating-linear-gradient(90deg, #2e8f37 0 7px, #1c6a26 7px 10px)"],
  ["|", ""],
  ["Downloads", "linear-gradient(#1e1e1e, #1e1e1e) 26px 0 / 40px 8px no-repeat, #58b4e2"],
  ["Trash", "radial-gradient(circle at 14px 10px, #bbb 0 10px, transparent 11px), radial-gradient(circle at 44px 10px, #3b95d6 0 10px, transparent 11px), linear-gradient(100deg, #ddd 20px, #e9bf4c 34px, #fff 40px)"],
];

/* ---------- text properties dialog ---------- */

const DialogWindow = styled.section`
  position: absolute;
  top: 197px;
  left: 528px;
  width: 815px;
  border: 1px solid #626668;
  border-radius: 14px;
  background: #2d3133;
  box-shadow: 0 12px 36px rgba(0, 0, 0, 0.6);
  overflow: hidden;
`;

const TitleBar = styled.header`
  height: 36px;
  padding: 0 9px 2px;
  display: grid;
  grid-template-columns: 1fr auto 1fr;
  align-items: center;
  background: #3a3d3f;
  border-bottom: 1px solid #17191a;
  h1 { margin: 0; font-size: 17px; font-weight: 600; line-height: 20px; color: #c6c8c9; }
`;

const Lights = styled.div`
  display: flex;
  gap: 10px;
`;

const Light = styled.button<{ $c: string }>`
  width: 16px;
  height: 16px;
  padding: 0;
  border: 0;
  border-radius: 50%;
  background: ${(p) => p.$c};
`;

const DialogBody = styled.form`
  padding: 13px 18px 0;
`;

const TextLabel = styled.label`
  display: block;
  height: 20px;
  line-height: 20px;
`;

const TextArea = styled.textarea`
  display: block;
  width: 100%;
  height: 130px;
  padding: 1px 0 0 1px;
  border: 0;
  outline: 0;
  resize: none;
  background: #171717;
  color: #dfe6ee;
  font: 14px/22px ${MONO};
  &::selection { background: #2f5187; color: #dfe6ee; }
`;

const LockedRow = styled.div`
  padding: 21px 0 12px;
  line-height: 20px;
`;

const Columns = styled.div`
  display: grid;
  grid-template-columns: 438px 1fr;
`;

const FormGrid = styled.div`
  display: grid;
  grid-template-rows: 44px 39px;
  grid-auto-rows: 33px;
  align-items: start;
`;

const Row = styled.div<{ $inset?: boolean; $h: number }>`
  height: ${(p) => p.$h}px;
  display: flex;
  align-items: center;
  ${(p) => p.$inset && css`padding-left: 12px;`}
`;

const FieldLabel = styled.label<{ $w: number }>`
  flex: none;
  width: ${(p) => p.$w}px;
  white-space: nowrap;
`;

const Field = styled.input<{ $focus?: boolean }>`
  width: 151px;
  height: 27px;
  margin-right: 6px;
  padding: 0 5px;
  border: 0;
  border-bottom: 1px solid #55595b;
  border-top: 1px solid #3c4042;
  outline: 0;
  background: #34383a;
  box-shadow: ${(p) => (p.$focus ? "0 0 0 3px #2f6a93" : "none")};
  border-radius: ${(p) => (p.$focus ? 1 : 0)}px;
`;

const FontShell = styled(SelectShell)`
  background: linear-gradient(#5f6365, #686c6e);
  > svg { margin-right: 0; }
`;

const Combo = styled.div`
  width: 152px;
  height: 25px;
  padding-right: 2px;
  display: flex;
  align-items: center;
  border-radius: 5px;
  border-bottom: 1px solid #55595b;
  background: #34383a;
  input { flex: 1; min-width: 0; padding: 0 0 0 11px; border: 0; outline: 0; background: transparent; }
`;

const StyleBar = styled.div`
  display: flex;
  align-items: center;
  gap: 1px;
`;

const StyleButton = styled.button<{ $on?: boolean }>`
  width: 33px;
  height: 34px;
  padding: 0;
  display: grid;
  place-items: center;
  border: 1px solid ${(p) => (p.$on ? "#3f6080" : "transparent")};
  background: ${(p) => (p.$on ? "#0c1930" : "transparent")};
  font-size: 20px;
  line-height: 20px;
`;

const Footer = styled.div`
  padding: 19px 16px 13px 12px;
  display: flex;
  gap: 16px;
`;

const PushButton = styled.button<{ $w: number; $primary?: boolean }>`
  width: ${(p) => p.$w}px;
  height: 27px;
  padding: 0;
  border: 0;
  border-radius: 6px;
  font-weight: 500;
  white-space: nowrap;
  background: ${(p) => (p.$primary ? "#1765de" : "#63676a")};
  &:first-child { margin-right: auto; }
`;

const bars = (y: number, spans: [number, number][]) => (
  <svg width="20" height="20" viewBox="0 0 20 20" aria-hidden="true">
    {spans.map(([a, b], i) => <path key={i} d={`M${a} ${y + i * 4}H${b}`} stroke="#dcdcdc" strokeWidth="1.500" />)}
  </svg>
);
const full: [number, number][] = [[2, 18], [2, 18], [2, 18]];

const NumberRow = ({ label, value, w, focus, inset }: { label: string; value: string; w: number; focus?: boolean; inset?: boolean }) => (
  <Row $h={33} $inset={inset}>
    <FieldLabel htmlFor={label} $w={w}>{label}:</FieldLabel>
    <Field id={label} defaultValue={value} $focus={focus} />
    mm
  </Row>
);

const TextDialog = () => {
  const area = useRef<HTMLTextAreaElement>(null);
  useEffect(() => {
    area.current?.focus();
    area.current?.select();
  }, []);
  return (
    <DialogWindow role="dialog" aria-labelledby="dialog-title">
      <TitleBar>
        <Lights>
          <Light type="button" aria-label="Close" $c="#fb5d57" />
          <Light type="button" aria-label="Minimise" $c="#56595b" />
          <Light type="button" aria-label="Zoom" $c="#27c440" />
        </Lights>
        <h1 id="dialog-title">Text Properties</h1>
      </TitleBar>
      <DialogBody onSubmit={(e) => e.preventDefault()}>
        <TextLabel htmlFor="text">Text:</TextLabel>
        <TextArea id="text" ref={area} spellCheck={false} defaultValue={"Mishael\nSharaf"} />
        <LockedRow><CheckLabel><Check type="checkbox" />Locked</CheckLabel></LockedRow>
        <Columns>
          <FormGrid>
            <Row $h={30}>
              <FieldLabel as="span" $w={90}>Layer:</FieldLabel>
              <LayerField $w={280}><Swatch $c="#c83434" $w={17} $h={17} />F.Cu</LayerField>
              <DropButton type="button" aria-label="Choose layer" $light><Chevron /></DropButton>
            </Row>
            <Row $h={34}>
              <FieldLabel htmlFor="font" $w={90}>Font:</FieldLabel>
              <FontShell $w={313}>
                <SelectBox id="font" defaultValue="KiCad Font"><option>KiCad Font</option></SelectBox>
                <UpDown box />
              </FontShell>
            </Row>
            <NumberRow label="Width" value="1.7" w={90} />
            <NumberRow label="Height" value="1.7" w={90} focus />
            <NumberRow label="Thickness" value="0.3" w={90} />
          </FormGrid>
          <FormGrid>
            <Row $h={30} $inset><CheckLabel><Check type="checkbox" />Knockout</CheckLabel></Row>
            <StyleBar>
              <StyleButton type="button" $on><b>B</b></StyleButton>
              <StyleButton type="button"><i>I</i></StyleButton>
              <VRule $w={12} $h={24} />
              <StyleButton type="button" aria-label="Align left" $on>{bars(4, [[2, 18], [2, 12], [2, 18], [2, 12]])}</StyleButton>
              <StyleButton type="button" aria-label="Align centre">{bars(4, [[2, 18], [5, 15], [2, 18], [5, 15]])}</StyleButton>
              <StyleButton type="button" aria-label="Align right">{bars(4, [[2, 18], [8, 18], [2, 18], [8, 18]])}</StyleButton>
              <VRule $w={12} $h={24} />
              <StyleButton type="button" aria-label="Align top">{bars(1, full)}</StyleButton>
              <StyleButton type="button" aria-label="Align middle">{bars(6, full)}</StyleButton>
              <StyleButton type="button" aria-label="Align bottom" $on>{bars(11, full)}</StyleButton>
              <VRule $w={12} $h={24} />
              <StyleButton type="button">Я</StyleButton>
            </StyleBar>
            <NumberRow label="Position X" value="171.9975" w={101} inset />
            <NumberRow label="Position Y" value="93.706" w={101} inset />
            <Row $h={33} $inset>
              <FieldLabel htmlFor="orientation" $w={101}>Orientation:</FieldLabel>
              <Combo>
                <input id="orientation" defaultValue="0" />
                <DropButton type="button" aria-label="Choose orientation" $s={20}><Chevron /></DropButton>
              </Combo>
            </Row>
          </FormGrid>
        </Columns>
      </DialogBody>
      <Footer>
        <PushButton type="button" $w={349}>Update Thickness According to Text Size</PushButton>
        <PushButton type="button" $w={109}>Cancel</PushButton>
        <PushButton type="button" $w={110} $primary>OK</PushButton>
      </Footer>
    </DialogWindow>
  );
};

export default function App() {
  return (
    <Desktop>
      <GlobalStyle />
      <AppWindow>
        <Toolbar><ToolList items={TOP} /></Toolbar>
        <OptionsBar>
          <Chooser label="Track width" value="Track: use netclass width" w={273} />
          <VRule $w={2} $h={1} />
          <ToolButton type="button" aria-label="Automatic track width" $on><Icon name="autoWidth" /></ToolButton>
          <VRule $w={14} />
          <Chooser label="Via size" value="Via: use netclass sizes" w={233} />
          <VRule $w={14} />
          <LayerField $w={198} $dim><Swatch $c="#c83434" $w={17} $h={17} />F.Cu (PgUp)</LayerField>
          <DropButton type="button" aria-label="Active layer"><Chevron /></DropButton>
          <ToolButton type="button" aria-label="Layer pair" $w={44}>
            <svg width="32" height="32" viewBox="0 0 32 32" aria-hidden="true">
              <path d="M0 0H21L12 32H0Z" fill="#c43434" />
              <path d="M23 0H32V32H14Z" fill="#4a7fcb" />
              <path d="M20 0L11 32M23 0L14 32" stroke="#f4f4f4" strokeWidth="1" />
            </svg>
          </ToolButton>
          <VRule $w={14} />
          <Chooser label="Grid" value="0.5000 mm (19.69 mils)" w={261} />
          <VRule $w={14} />
          <Chooser label="Zoom" value="Zoom 3.50" w={149} />
        </OptionsBar>
        <Main>
          <SideBar $w={45} $pr={3}><ToolList items={LEFT} vertical /></SideBar>
          <Canvas><Board /></Canvas>
          <SideBar $w={52} $pr={6}><ToolList items={RIGHT} vertical /></SideBar>
          <Appearance />
        </Main>
        <MessagePanel>
          {MESSAGES.map(([k, v]) => (
            <div key={k}><dt>{k}</dt><dd>{v}</dd></div>
          ))}
        </MessagePanel>
        <StatusBar>
          <span>Z 3.75</span>
          <span>X 178.5000  Y 91.0000</span>
          <span>dx 178.5000  dy 91.0000  dist 200.3578</span>
          <span>grid 0.5000</span>
          <span>mm</span>
        </StatusBar>
      </AppWindow>
      <DockStrip>
        <DockTray>
          {DOCK.map(([name, bg], i) =>
            name === "|" ? <DockRule key={i} /> : <DockItem key={i} type="button" aria-label={name} $bg={bg} />
          )}
        </DockTray>
      </DockStrip>
      <TextDialog />
    </Desktop>
  );
}
